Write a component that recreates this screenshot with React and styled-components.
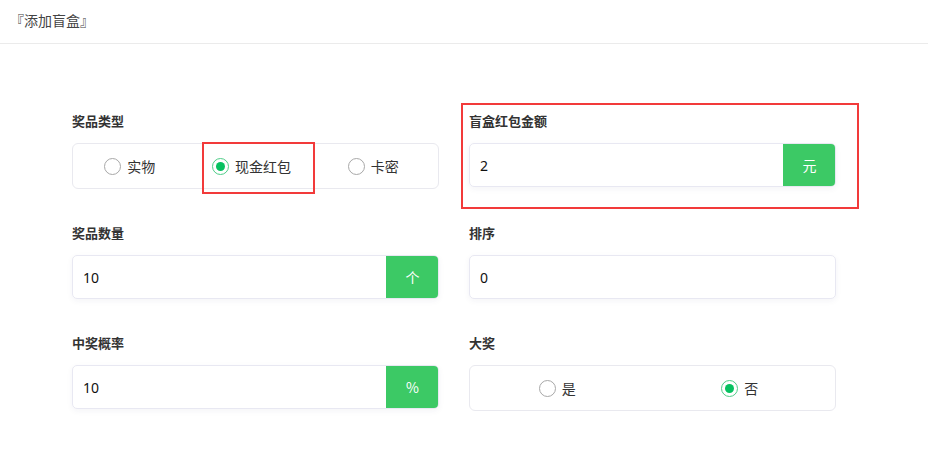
import React, { useState } from "react";
import styled, { createGlobalStyle } from "styled-components";

const GlobalStyle = createGlobalStyle`
    html, body {
        margin: 0;
        padding: 0;
        background: #fff;
        font-family: "Noto Sans CJK SC", "Noto Sans", "Liberation Sans", sans-serif;
        color: #333;
    }
`;

const App = () => {
    const [type, setType] = useState("cash");
    const [grand, setGrand] = useState("no");

    return (
        <Page>
            <GlobalStyle />
            <Header>『添加盲盒』</Header>
            <Form>
                <Field>
                    <Label>奖品类型</Label>
                    <RadioBox>
                        <RadioItem onClick={() => setType("real")}>
                            <Circle checked={type === "real"} />
                            <RadioText>实物</RadioText>
                        </RadioItem>
                        <RadioItem onClick={() => setType("cash")}>
                            <Circle checked={type === "cash"} />
                            <RadioText>现金红包</RadioText>
                            {/* 标注框 */}
                            <Mark left="7px" right="1px" top="-2px" bottom="-6px" />
                        </RadioItem>
                        <RadioItem onClick={() => setType("card")}>
                            <Circle checked={type === "card"} />
                            <RadioText>卡密</RadioText>
                        </RadioItem>
                    </RadioBox>
                </Field>

                <Field>
                    <Label>盲盒红包金额</Label>
                    <InputWrap>
                        <Input defaultValue="2" />
                        <Addon>元</Addon>
                    </InputWrap>
                    <Mark left="-8px" right="-23px" top="-10px" bottom="-20px" />
                </Field>

                <Field>
                    <Label>奖品数量</Label>
                    <InputWrap>
                        <Input defaultValue="10" />
                        <Addon>个</Addon>
                    </InputWrap>
                </Field>

                <Field>
                    <Label>排序</Label>
                    <InputWrap>
                        <Input defaultValue="0" />
                    </InputWrap>
                </Field>

                <Field>
                    <Label>中奖概率</Label>
                    <InputWrap>
                        <Input defaultValue="10" />
                        <Addon>%</Addon>
                    </InputWrap>
                </Field>

                <Field>
                    <Label>大奖</Label>
                    <RadioBox>
                        <RadioItem onClick={() => setGrand("yes")}>
                            <Circle checked={grand === "yes"} />
                            <RadioText>是</RadioText>
                        </RadioItem>
                        <RadioItem onClick={() => setGrand("no")}>
                            <Circle checked={grand === "no"} />
                            <RadioText>否</RadioText>
                        </RadioItem>
                    </RadioBox>
                </Field>
            </Form>
        </Page>
    );
};

export default App;

const Page = styled.div`
    width: 928px;
    min-height: 460px;
    background: #fff;
`;

const Header = styled.div`
    height: 44px;
    box-sizing: border-box;
    padding: 0 0 4px 10px;
    display: flex;
    align-items: center;
    border-bottom: 1px solid #ebebeb;
    font-size: 14px;
    color: #444;
`;

const Form = styled.div`
    display: grid;
    grid-template-columns: 367px 367px;
    column-gap: 30px;
    row-gap: 36px;
    padding: 69px 0 0 72px;
`;

const Field = styled.div`
    position: relative;
    display: flex;
    flex-direction: column;
`;

const Label = styled.div`
    height: 16px;
    line-height: 16px;
    margin-bottom: 14px;
    font-size: 13px;
    font-weight: 600;
    color: #333;
`;

const RadioBox = styled.div`
    height: 46px;
    box-sizing: border-box;
    border: 1px solid #e9e9ef;
    border-radius: 6px;
    display: flex;
`;

const RadioItem = styled.div`
    position: relative;
    flex: 1;
    display: flex;
    align-items: center;
    justify-content: center;
    padding-right: 8px;
    cursor: pointer;
`;

const Circle = styled.span`
    width: 17px;
    height: 17px;
    box-sizing: border-box;
    border-radius: 50%;
    border: 1px solid ${(props) => (props.checked ? "#4fcd88" : "#a8a8a8")};
    display: flex;
    align-items: center;
    justify-content: center;
    &::after {
        content: "";
        width: 9px;
        height: 9px;
        border-radius: 50%;
        background: #07c160;
        display: ${(props) => (props.checked ? "block" : "none")};
    }
`;

const RadioText = styled.span`
    margin-left: 6px;
    font-size: 14px;
    color: #333;
`;

const InputWrap = styled.div`
    height: 44px;
    box-sizing: border-box;
    display: flex;
    border: 1px solid #e8e8f2;
    border-radius: 5px;
    box-shadow: 0 2px 6px rgba(40, 40, 90, 0.05);
    overflow: hidden;
`;

const Input = styled.input`
    flex: 1;
    min-width: 0;
    border: none;
    outline: none;
    padding: 0 10px;
    font-size: 14px;
    color: #111;
    font-family: "Noto Sans", "Liberation Sans", sans-serif;
    background: transparent;
`;

const Addon = styled.div`
    width: 53px;
    margin: -1px -1px -1px 0;
    background: #3cc965;
    color: #fff;
    font-size: 14px;
    display: flex;
    align-items: center;
    justify-content: center;
`;

const Mark = styled.div`
    position: absolute;
    left: ${(props) => props.left};
    right: ${(props) => props.right};
    top: ${(props) => props.top};
    bottom: ${(props) => props.bottom};
    border: 2px solid #f23a3a;
    pointer-events: none;
`;
